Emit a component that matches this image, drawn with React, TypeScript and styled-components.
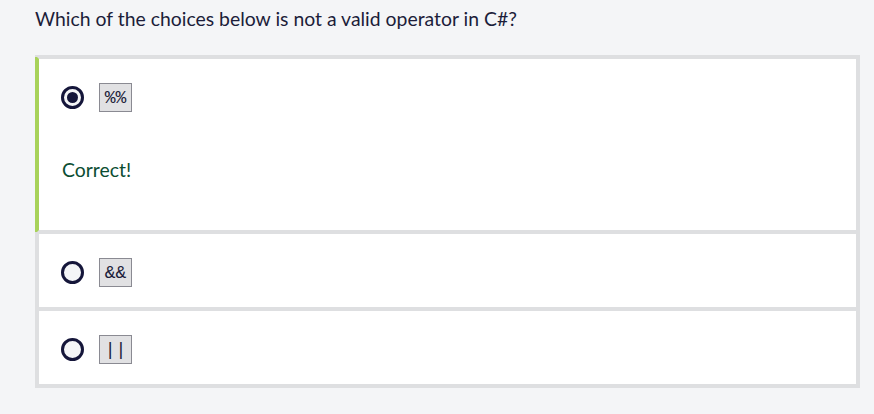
import React from "react";
import styled, { createGlobalStyle } from "styled-components";

const Global = createGlobalStyle`
  html, body { margin: 0; padding: 0; background: #f4f5f7; }
  body { font-family: Lato, "Noto Sans", sans-serif; }
`;

const Page = styled.div`
  width: 874px;
  height: 414px;
  box-sizing: border-box;
  padding: 5px 14px 0 35px;
  background: #f4f5f7;
`;

const Question = styled.div`
  font-size: 19.4px;
  line-height: 28px;
  color: #1c1d3a;
  margin-bottom: 22px;
`;

const List = styled.div`
  border: 2px solid #dedfe1;
  display: flex;
  flex-direction: column;
`;

const Card = styled.div<{ $correct?: boolean }>`
  background: #ffffff;
  border: 2px solid #dedfe1;
  border-left-color: ${(p) => (p.$correct ? "#a8d25a" : "#dedfe1")};
  ${(p) => (p.$correct ? "box-shadow: -2px 0 0 #a8d25a;" : "")}
  padding: 24px 22px 20px;
`;

const Row = styled.div`
  display: flex;
  align-items: center;
  gap: 15px;
  height: 29px;
`;

const Radio = styled.span<{ $checked?: boolean }>`
  width: 23px;
  height: 23px;
  box-sizing: border-box;
  border-radius: 50%;
  border: 3px solid #15163a;
  background: #f4f5f7;
  display: flex;
  align-items: center;
  justify-content: center;
  &::after {
    content: "";
    display: ${(p) => (p.$checked ? "block" : "none")};
    width: 11px;
    height: 11px;
    border-radius: 50%;
    background: #15163a;
  }
`;

const Code = styled.span`
  width: 33px;
  height: 29px;
  box-sizing: border-box;
  border: 1px solid #8a8a92;
  background: #e1e1e3;
  color: #1c1d3a;
  font-family: "Liberation Mono", "DejaVu Sans Mono", monospace;
  font-size: 18px;
  display: flex;
  align-items: center;
  justify-content: center;
`;

const Feedback = styled.div`
  margin-top: 46px;
  margin-bottom: 28px;
  font-size: 19.4px;
  line-height: 24px;
  color: #0c4d32;
  padding-left: 1px;
`;

export default function App() {
  return (
    <>
      <Global />
      <Page>
        <Question>Which of the choices below is not a valid operator in C#?</Question>
        <List>
          <Card $correct>
            <Row>
              <Radio $checked />
              <Code>%%</Code>
            </Row>
            <Feedback>Correct!</Feedback>
          </Card>
          <Card>
            <Row>
              <Radio />
              <Code>&amp;&amp;</Code>
            </Row>
          </Card>
          <Card>
            <Row>
              <Radio />
              <Code>||</Code>
            </Row>
          </Card>
        </List>
      </Page>
    </>
  );
}
